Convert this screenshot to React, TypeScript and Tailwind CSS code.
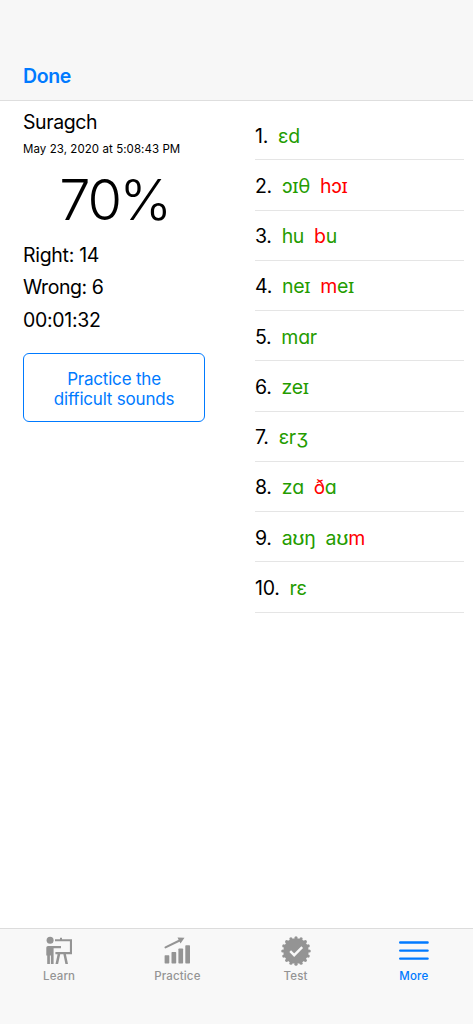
type Part = { text: string; wrong?: boolean };

interface Answer {
  id: number;
  words: Part[][];
}

const answers: Answer[] = [
  { id: 1, words: [[{ text: "ɛd" }]] },
  { id: 2, words: [[{ text: "ɔɪθ" }], [{ text: "hɔɪ", wrong: true }]] },
  { id: 3, words: [[{ text: "hu" }], [{ text: "b", wrong: true }, { text: "u" }]] },
  { id: 4, words: [[{ text: "neɪ" }], [{ text: "m", wrong: true }, { text: "eɪ" }]] },
  { id: 5, words: [[{ text: "mɑr" }]] },
  { id: 6, words: [[{ text: "zeɪ" }]] },
  { id: 7, words: [[{ text: "ɛrʒ" }]] },
  { id: 8, words: [[{ text: "zɑ" }], [{ text: "ð", wrong: true }, { text: "ɑ" }]] },
  { id: 9, words: [[{ text: "aʊŋ" }], [{ text: "aʊ" }, { text: "m", wrong: true }]] },
  { id: 10, words: [[{ text: "rɛ" }]] },
];

const LearnIcon = () => (
  <svg width="30" height="30" viewBox="0 0 30 30" fill="currentColor">
    <circle cx="6.1" cy="4.3" r="3.5" />
    <path d="M4 9.9H17V12.2H9.6V28H6.9V19.6H5.9V28H3.2V19.6H2.3V11.6Q2.3 9.9 4 9.9Z" />
    <path d="M11 3.2H16V1.8H18V3.2H28V18.2H21.9L24 28H21.4L19.4 18.2H16.2L14.1 28H11.5L13.6 18.2H11.4V15.9H25.9V5.2H11Z" />
  </svg>
);

const PracticeIcon = () => (
  <svg width="30" height="30" viewBox="0 0 30 30" fill="currentColor">
    <rect x="2.6" y="19.2" width="4.7" height="8.2" rx="0.7" />
    <rect x="9.5" y="16" width="4.7" height="11.4" rx="0.7" />
    <rect x="16.4" y="12.6" width="4.7" height="14.8" rx="0.7" />
    <rect x="23.3" y="9.2" width="4.7" height="18.2" rx="0.7" />
    <path d="M3.5 11.4L18.1 4.3" fill="none" stroke="currentColor" strokeWidth="2.1" strokeLinecap="round" />
    <path d="M15.5 1.5L22.5 1.7L18.5 7.5Z" />
  </svg>
);

const toothAngles = Array.from({ length: 16 }, (_, i) => (i * Math.PI) / 8);

const TestIcon = () => (
  <svg width="30" height="30" viewBox="0 0 30 30" fill="currentColor">
    <circle cx="15" cy="15" r="12.7" />
    {toothAngles.map((a) => (
      <circle key={a} cx={15 + 13.2 * Math.cos(a)} cy={15 + 13.2 * Math.sin(a)} r="1.6" />
    ))}
    <path d="M9.2 15.2L13.2 19.2L21.2 11.2" fill="none" stroke="#f8f8f8" strokeWidth="2.4" />
  </svg>
);

const MoreIcon = () => (
  <svg width="30" height="30" viewBox="0 0 30 30" fill="none" stroke="currentColor" strokeWidth="2.4" strokeLinecap="round">
    <path d="M1.2 6.5H28.6M1.2 14.6H28.6M1.2 22.6H28.6" />
  </svg>
);

const tabs = [
  { label: "Learn", icon: <LearnIcon />, active: false },
  { label: "Practice", icon: <PracticeIcon />, active: false },
  { label: "Test", icon: <TestIcon />, active: false },
  { label: "More", icon: <MoreIcon />, active: true },
];

const Summary = () => (
  <section className="w-[182px] text-[19.5px] leading-[26px] tracking-[-0.3px]">
    <h1 className="mt-[8px] tracking-[-0.4px]">Suragch</h1>
    <p className="mt-[6px] text-[11.5px] leading-[16px] tracking-[0.07px] whitespace-nowrap">
      May 23, 2020 at 5:08:43 PM
    </p>
    <p className="mt-[8px] pl-[1px] text-center text-[56px] leading-[70px] font-[360] tracking-[-2.4px]">70%</p>
    <p className="mt-[7px]">Right: 14</p>
    <p className="mt-[6px] tracking-[-0.45px]">Wrong: 6</p>
    <p className="mt-[7px]">00:01:32</p>
    <button className="mt-[20px] h-[69px] w-full rounded-[6px] border border-[#007aff] pt-[2px] text-[17px] leading-[20px] tracking-[-0.2px] text-[#007aff]">
      Practice the
      <br />
      difficult sounds
    </button>
  </section>
);

const AnswerList = () => (
  <ul className="w-[209px] pt-[9px] text-[19.5px] tracking-[-0.3px]">
    {answers.map((answer) => (
      <li key={answer.id} className="flex h-[50.25px] items-center gap-[10px] border-b border-[#e5e5e5] pt-[3px]">
        <span>{answer.id}.</span>
        {answer.words.map((word, i) => (
          <span key={i}>
            {word.map((part) => (
              <span key={part.text} className={part.wrong ? "text-[#ff0000]" : "text-[#249c00]"}>
                {part.text}
              </span>
            ))}
          </span>
        ))}
      </li>
    ))}
  </ul>
);

export default function App() {
  return (
    <div className="flex h-screen w-full flex-col bg-white font-['Inter','Noto_Sans',sans-serif] text-black">
      <header className="flex h-[101px] items-end border-b border-[#dedede] bg-[#f7f7f7] px-[23px] pb-[11px]">
        <button className="text-[19.5px] leading-[26px] font-semibold tracking-[-0.4px] text-[#007aff]">Done</button>
      </header>
      <main className="flex flex-1 justify-between pr-[9px] pl-[23px]">
        <Summary />
        <AnswerList />
      </main>
      <nav className="grid h-[96px] grid-cols-4 border-t border-[#dcdcdc] bg-[#f8f8f8] pt-[7px]">
        {tabs.map((tab) => (
          <button
            key={tab.label}
            className={`flex flex-col items-center text-[11.5px] leading-[16px] font-medium tracking-[0.15px] ${tab.active ? "text-[#007aff]" : "text-[#949494]"}`}
          >
            {tab.icon}
            <span className="mt-[2px]">{tab.label}</span>
          </button>
        ))}
      </nav>
    </div>
  );
}
